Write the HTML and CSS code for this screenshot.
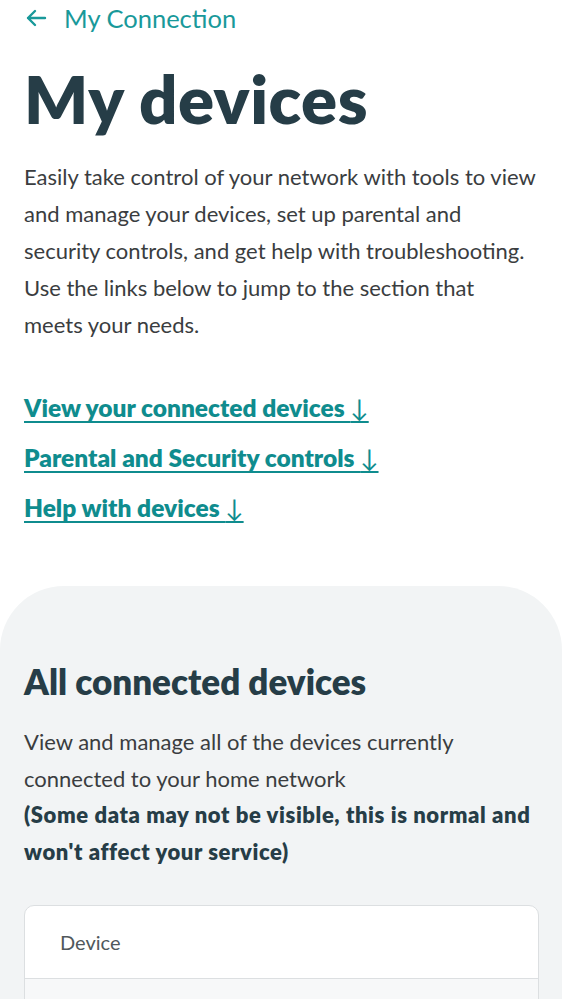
FILE: index.html
```html
<!DOCTYPE html>
<html lang="en">

<head>
    <meta charset="UTF-8">
    <title>My devices</title>
    <link rel="stylesheet" href="styles.css">
</head>

<body>

    <header class="top">
        <a class="back" href="#">
            <svg class="back-icon" viewBox="0 0 24 24" width="24" height="24" aria-hidden="true">
                <path d="M21 12H4M11 5l-7 7 7 7" fill="none" stroke="currentColor" stroke-width="2.4" stroke-linecap="round" stroke-linejoin="round"/>
            </svg>
            <span>My Connection</span>
        </a>
    </header>

    <main>
        <section class="intro">
            <h1>My devices</h1>
            <p class="lead">Easily take control of your network with tools to view and manage your devices, set up parental and security controls, and get help with troubleshooting. Use the links below to jump to the section that meets your needs.</p>

            <ul class="jump-links">
                <li><a href="#devices">View your connected devices <span class="arrow">&darr;</span></a></li>
                <li><a href="#parental">Parental and Security controls <span class="arrow">&darr;</span></a></li>
                <li><a href="#help">Help with devices <span class="arrow">&darr;</span></a></li>
            </ul>
        </section>

        <section class="panel" id="devices">
            <h2>All connected devices</h2>
            <p class="panel-text">View and manage all of the devices currently connected to your home network<br>
                <b>(Some data may not be visible, this is normal and won't affect your service)</b></p>

            <div class="table-card">
                <div class="table-head">Device</div>
                <div class="table-row"></div>
            </div>
        </section>
    </main>

</body>

</html>
```

FILE: styles.css
```css
body {
    margin: 0;
    font-family: Lato, "Open Sans", sans-serif;
    color: #3b3f42;
    background-color: #ffffff;
}

a {
    color: #0f8c8e;
}

.top {
    padding: 1px 24px 0;
}

.back {
    display: inline-flex;
    align-items: center;
    gap: 16px;
    font-size: 25.5px;
    text-decoration: none;
    color: #19999a;
    height: 34px;
}

.back-icon {
    color: #19999a;
}

.intro {
    padding: 0 24px 53px;
}

h1 {
    margin: 23px 0 0;
    font-size: 67px;
    font-weight: 800;
    line-height: 80px;
    color: #263d47;
    letter-spacing: 0.5px;
}

.lead {
    margin: 20px 0 0;
    font-size: 22px;
    line-height: 37px;
    color: #3a3d40;
}

.jump-links {
    list-style: none;
    margin: 40px 0 0;
    padding: 0;
}

.jump-links li {
    height: 50px;
    line-height: 50px;
}

.jump-links a {
    font-size: 24.5px;
    font-weight: 800;
    text-decoration: underline;
    text-decoration-thickness: 2px;
    text-underline-offset: 4px;
}

.arrow {
    font-weight: 400;
}

.panel {
    background-color: #f2f4f5;
    border-radius: 64px 64px 0 0;
    padding: 73px 24px 40px;
}

h2 {
    margin: 0;
    font-size: 35px;
    font-weight: 800;
    line-height: 44px;
    color: #263d47;
}

.panel-text {
    margin: 21px 0 0;
    font-size: 22px;
    line-height: 36.5px;
    color: #3a3d40;
}

.panel-text b {
    color: #263d47;
    font-weight: 800;
    letter-spacing: 0.6px;
}

.table-card {
    margin-top: 35px;
    margin-right: -1px;
    background-color: #ffffff;
    border: 1px solid #dcdfe1;
    border-radius: 10px 10px 0 0;
    overflow: hidden;
}

.table-head {
    height: 72px;
    display: flex;
    align-items: center;
    padding-left: 35px;
    font-size: 20px;
    color: #50585c;
    border-bottom: 1px solid #dcdfe1;
}

.table-row {
    height: 60px;
    background-color: #f7f8f9;
}
```
